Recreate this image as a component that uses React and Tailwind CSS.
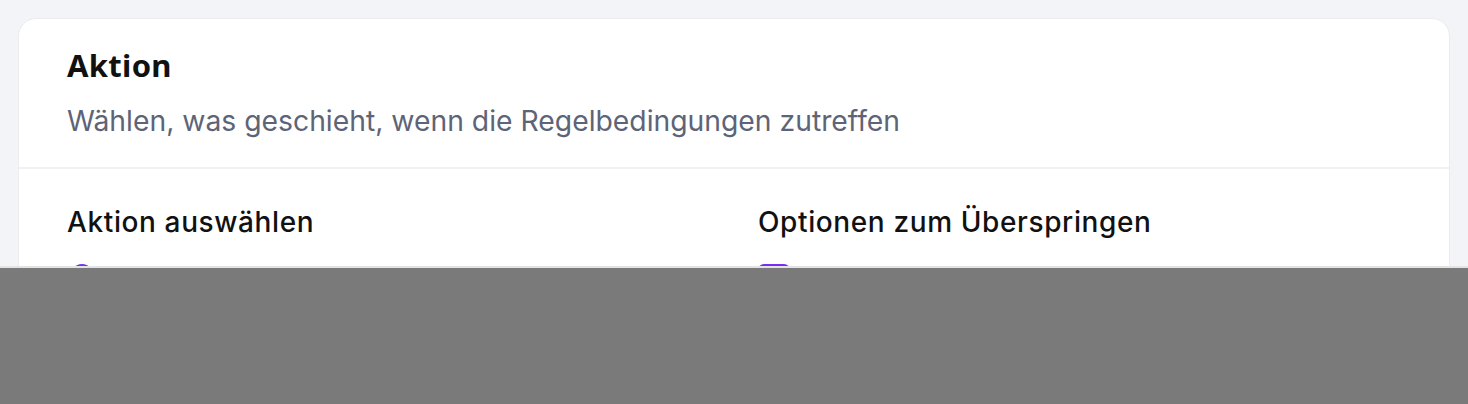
import React from 'react';

const sans = { fontFamily: 'Inter, "Noto Sans", sans-serif' };

export default function App() {
    return (
        <div className="w-[1468px] h-[404px] bg-[#f3f4f7] overflow-hidden relative" style={sans}>
            <div className="pt-[18px] px-[18px]">
                {/* Card */}
                <div className="bg-white border border-[#ececef] rounded-[18px] h-[400px]">
                    {/* Header */}
                    <div className="px-12 pt-[26px] pb-[28px] border-b-2 border-[#f1f1f3]">
                        <h2 className="text-[31px] font-bold text-[#111111] leading-[40px] tracking-[0.01em]" style={{ fontFamily: '"Noto Sans", sans-serif' }}>
                            Aktion
                        </h2>
                        <p className="mt-[18px] text-[28.3px] leading-[36px] text-[#5e6477]">
                            Wählen, was geschieht, wenn die Regelbedingungen zutreffen
                        </p>
                    </div>

                    {/* Body */}
                    <div className="px-12 pt-[35px] grid grid-cols-2 gap-12">
                        <div>
                            <h3 className="text-[28px] font-medium text-[#111111] leading-[36px] tracking-[0.022em]">
                                Aktion auswählen
                            </h3>
                            <div className="mt-[24px] flex items-start gap-4">
                                <span className="w-6 h-6 ml-[3px] rounded-full border-[3px] border-[#7a2cf5] bg-white"></span>
                                <span className="mt-3 text-[22px] text-[#111111]">Nicht ausführen</span>
                            </div>
                        </div>
                        <div>
                            <h3 className="text-[28px] font-medium text-[#111111] leading-[36px] tracking-[0.022em]">
                                Optionen zum Überspringen
                            </h3>
                            <div className="mt-[24px] flex items-start gap-4">
                                <span className="w-8 h-8 rounded-md bg-[#7a2cf5]"></span>
                                <span className="mt-3 text-[22px] text-[#111111]">Alle überspringen</span>
                            </div>
                        </div>
                    </div>
                </div>
            </div>

            {/* Overlay band */}
            <div className="absolute left-0 right-0 top-[266px] bottom-0 border-t-2 border-[#e3e3e4] bg-[#7a7a7b]"></div>
        </div>
    );
}
